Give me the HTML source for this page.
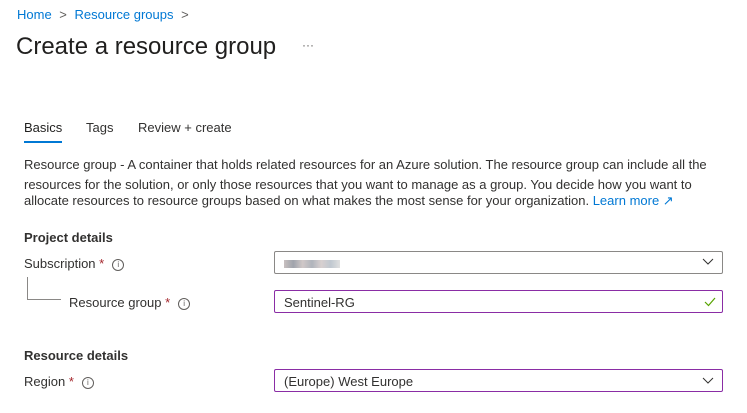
<!DOCTYPE html>
<html><head><meta charset="utf-8"><style>
*{margin:0;padding:0;box-sizing:border-box}
body{width:747px;height:413px;background:#fff;font-family:"Liberation Sans",sans-serif;color:#323130;position:relative;overflow:hidden}
.a{position:absolute;white-space:nowrap}
.blue{color:#0078d4}
.t{font-size:13px}
.d{font-size:13px}
.box{position:absolute;left:274px;width:449px;height:23px;border:1px solid #8a8886;border-radius:2px;font-size:13px;padding:4px 0 0 9px}
.pur{border-color:#8a2da5}
.star{color:#a4262c}
.info{display:inline-block;width:12px;height:12px;border:1px solid #605e5c;border-radius:50%;font-size:8px;text-align:center;line-height:10px;color:#605e5c;vertical-align:middle;margin-left:8px}
</style></head><body>
<div class="a t blue" style="left:17px;top:7px">Home <span style="color:#605e5c;margin:0 4px">&gt;</span> Resource groups <span style="color:#605e5c;margin-left:4px">&gt;</span></div>
<div class="a" style="left:16px;top:33px;font-size:24px;color:#201f1e">Create a resource group</div>
<div class="a" style="left:302px;top:38px;font-size:12px;color:#605e5c">···</div>
<div class="a t" style="left:24px;top:120px;color:#201f1e">Basics</div>
<div style="position:absolute;left:24px;top:141px;width:38px;height:2px;background:#0078d4"></div>
<div class="a t" style="left:86px;top:120px">Tags</div>
<div class="a t" style="left:138px;top:120px">Review + create</div>
<div class="a d" style="left:24px;top:157px">Resource group - A container that holds related resources for an Azure solution. The resource group can include all the</div>
<div class="a d" style="left:24px;top:177px">resources for the solution, or only those resources that you want to manage as a group. You decide how you want to</div>
<div class="a d" style="left:24px;top:193px">allocate resources to resource groups based on what makes the most sense for your organization. <span class="blue">Learn more ↗</span></div>
<div class="a" style="left:24px;top:230px;font-size:13px;font-weight:bold">Project details</div>
<div class="a t" style="left:24px;top:256px">Subscription <span class="star">*</span><span class="info">i</span></div>
<div style="position:absolute;left:27px;top:277px;width:34px;height:23px;border-left:1px solid #8a8886;border-bottom:1px solid #8a8886"></div>
<div class="a t" style="left:69px;top:295px">Resource group <span class="star">*</span><span class="info">i</span></div>
<div class="a" style="left:24px;top:348px;font-size:13px;font-weight:bold">Resource details</div>
<div class="a t" style="left:24px;top:374px">Region <span class="star">*</span><span class="info">i</span></div>
<div class="box" style="top:251px"><span style="display:inline-block;width:56px;height:8px;margin-top:3px;background:linear-gradient(90deg,#c8c0c0,#a0a4ac,#d0c8c8,#b0b4bc,#d8d0d0,#c0c8d0,#e0e0e0)"></span>
<svg style="position:absolute;right:8px;top:6px" width="12" height="8"><path d="M1 1l5 5 5-5" fill="none" stroke="#323130" stroke-width="1"/></svg></div>
<div class="box pur" style="top:290px">Sentinel-RG
<svg style="position:absolute;right:6px;top:6px" width="12" height="10"><path d="M1 5l3.5 3.5L11 1" fill="none" stroke="#57a300" stroke-width="1.2"/></svg></div>
<div class="box pur" style="top:369px">(Europe) West Europe
<svg style="position:absolute;right:8px;top:7px" width="12" height="8"><path d="M1 1l5 5 5-5" fill="none" stroke="#323130" stroke-width="1"/></svg></div>
</body></html>
